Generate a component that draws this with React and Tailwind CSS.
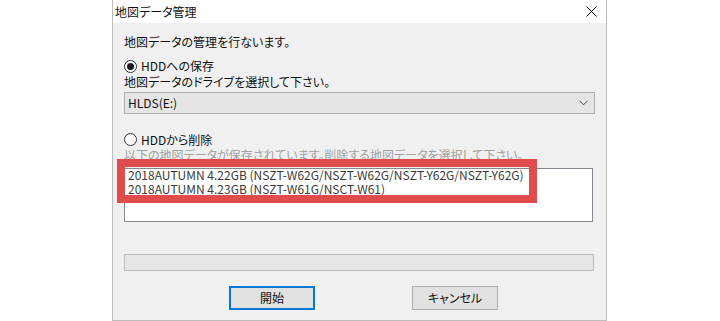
import React from "react";

const font = "font-['Noto_Sans_CJK_JP','Noto_Sans',sans-serif]";

function Radio({ checked }) {
  return (
    <span className="w-[13px] h-[13px] rounded-full border border-[#333] bg-white flex items-center justify-center shrink-0">
      {checked && <span className="w-[7px] h-[7px] rounded-full bg-[#1a1a1a]" />}
    </span>
  );
}

export default function App() {
  return (
    <div className={`w-[720px] h-[321px] bg-white overflow-hidden text-[12px] text-[#111] ${font} [font-feature-settings:'palt']`}>
      <div className="relative ml-[112px] w-[495px] h-[321px] border-x border-b border-[#bcbcbc] bg-[#f0f0f0] flex flex-col">
        {/* title bar */}
        <div className="h-[23px] bg-white flex items-center justify-between pl-[2px] pr-[9px] shrink-0">
          <span className="leading-[16px]">地図データ管理</span>
          <svg width="11" height="11" viewBox="0 0 11 11">
            <path d="M0.5 0.5 L10.5 10.5 M10.5 0.5 L0.5 10.5" stroke="#000" strokeWidth="1" />
          </svg>
        </div>
        {/* body */}
        <div className="flex flex-col pl-[11px] pr-[12px]">
          <div className="mt-[11px] h-[16px] leading-[16px]">地図データの管理を行ないます。</div>
          <div className="mt-[8px] h-[16px] flex items-center gap-[4px]">
            <Radio checked />
            <span className="leading-[16px]">HDDへの保存</span>
          </div>
          <div className="h-[16px] leading-[16px]">地図データのドライブを選択して下さい。</div>
          <div className="mt-[2px] h-[22px] w-[471px] border border-[#adadad] bg-[#e5e5e5] flex items-center justify-between pl-[3px] pr-[6px]">
            <span className="leading-[16px]">HLDS(E:)</span>
            <svg width="9" height="6" viewBox="0 0 9 6">
              <path d="M0.5 0.8 L4.5 4.8 L8.5 0.8" fill="none" stroke="#444" strokeWidth="1" />
            </svg>
          </div>
          <div className="mt-[18px] h-[15px] flex items-center gap-[4px]">
            <Radio />
            <span className="leading-[14px]">HDDから削除</span>
          </div>
          <div className="mt-[2px] h-[12px] leading-[12px] text-[#a0a0a0]">以下の地図データが保存されています。削除する地図データを選択して下さい。</div>
          <div className="mt-[7px] h-[54px] w-[469px] border border-[#828790] bg-white pl-[3px] text-[#3a3a3a]">
            <div className="-mt-[1px] h-[14px] leading-[14px]">2018AUTUMN 4.22GB (NSZT-W62G/NSZT-W62G/NSZT-Y62G/NSZT-Y62G)</div>
            <div className="h-[14px] leading-[14px]">2018AUTUMN 4.23GB (NSZT-W61G/NSCT-W61)</div>
          </div>
          <div className="mt-[32px] h-[17px] w-[470px] border border-[#bcbcbc] bg-[#e6e6e6]" />
          <div className="mt-[15px] flex gap-[97px] pl-[105px]">
            <div className="w-[86px] h-[24px] border-2 border-[#0078d7] bg-[#e1e1e1] flex items-center justify-center leading-[16px]">開始</div>
            <div className="w-[86px] h-[24px] border border-[#adadad] bg-[#e1e1e1] flex items-center justify-center leading-[16px]">キャンセル</div>
          </div>
        </div>
        {/* annotation overlay */}
        <div className="absolute left-[4px] top-[159px] w-[420px] h-[44px] border-[8px] border-[#e04b4b]" />
      </div>
    </div>
  );
}
